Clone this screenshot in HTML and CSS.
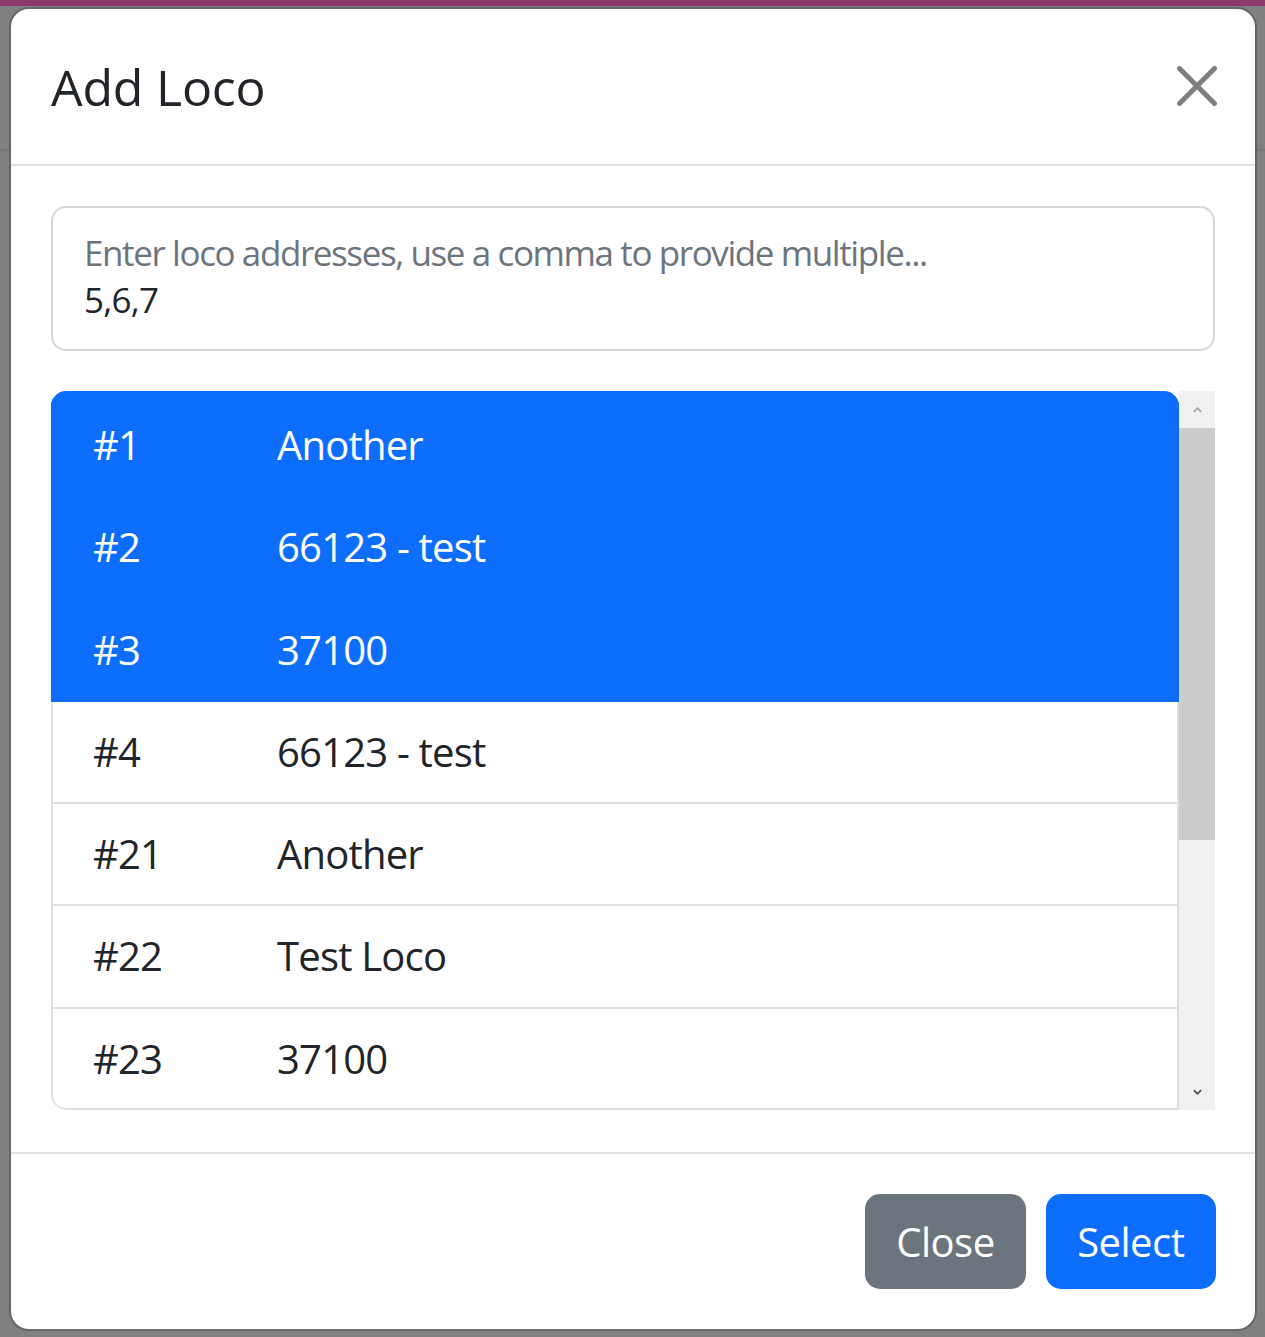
FILE: index.html
```html
<!DOCTYPE html>
<html lang="en">
<head>
<meta charset="utf-8">
<title>Add Loco</title>
<link rel="stylesheet" href="styles.css">
</head>
<body>
<div class="modal">
  <div class="modal-header">
    <h5 class="modal-title">Add Loco</h5>
    <button class="btn-close" aria-label="Close">
      <svg viewBox="0 0 16 16" width="40" height="40"><path d="M.293.293a1 1 0 0 1 1.414 0L8 6.586 14.293.293a1 1 0 1 1 1.414 1.414L9.414 8l6.293 6.293a1 1 0 0 1-1.414 1.414L8 9.414l-6.293 6.293a1 1 0 0 1-1.414-1.414L6.586 8 .293 1.707a1 1 0 0 1 0-1.414z"/></svg>
    </button>
  </div>
  <div class="modal-body">
    <div class="address-box">
      <div class="placeholder">Enter loco addresses, use a comma to provide multiple...</div>
      <div class="value">5,6,7</div>
    </div>
    <div class="list-wrap">
      <ul class="list">
        <li class="item active first"><span class="addr">#1</span><span class="name">Another</span></li>
        <li class="item active"><span class="addr">#2</span><span class="name">66123 - test</span></li>
        <li class="item active"><span class="addr">#3</span><span class="name">37100</span></li>
        <li class="item"><span class="addr">#4</span><span class="name">66123 - test</span></li>
        <li class="item"><span class="addr">#21</span><span class="name">Another</span></li>
        <li class="item"><span class="addr">#22</span><span class="name">Test Loco</span></li>
        <li class="item last"><span class="addr">#23</span><span class="name">37100</span></li>
      </ul>
      <div class="scrollbar">
        <div class="sb-btn"><svg viewBox="0 0 10 6" width="9" height="6"><path d="M1 5 5 1 9 5" fill="none" stroke="#a3a3a3" stroke-width="2"/></svg></div>
        <div class="sb-thumb"></div>
        <div class="sb-track"></div>
        <div class="sb-btn"><svg viewBox="0 0 10 6" width="9" height="6"><path d="M1 1 5 5 9 1" fill="none" stroke="#505050" stroke-width="2"/></svg></div>
      </div>
    </div>
  </div>
  <div class="modal-footer">
    <button class="btn btn-secondary">Close</button>
    <button class="btn btn-primary">Select</button>
  </div>
</div>
</body>
</html>
```
FILE: styles.css
```css
html, body {
  margin: 0;
  padding: 0;
}
body {
  width: 1265px;
  height: 1337px;
  overflow: hidden;
  background: linear-gradient(#8b3b6b 0 6px, #808080 6px 149px, #767676 149px 151px, #808080 151px);
  font-family: "Open Sans", "Noto Sans", sans-serif;
  color: #212529;
  padding-top: 7px;
  box-sizing: border-box;
}
.modal {
  margin-left: 9px;
  width: 1248px;
  height: 1324px;
  box-sizing: border-box;
  background: #fff;
  border: 2px solid #676767;
  border-radius: 20px;
  display: flex;
  flex-direction: column;
  overflow: hidden;
}
.modal-header {
  display: flex;
  align-items: center;
  justify-content: space-between;
  padding: 41px 38px 39px 40px;
  border-bottom: 2px solid #dee2e6;
}
.modal-title {
  margin: 0;
  font-size: 50px;
  line-height: 75px;
  font-weight: 500;
  letter-spacing: -0.2px;
}
.btn-close {
  border: 0;
  background: none;
  padding: 0;
  width: 40px;
  height: 40px;
  margin-top: -4px;
  opacity: .5;
  cursor: pointer;
}
.btn-close svg {
  display: block;
  fill: #000;
}
.modal-body {
  padding: 40px;
  flex: 1;
}
.address-box {
  height: 145px;
  box-sizing: border-box;
  border: 2px solid #d3d7dc;
  border-radius: 15px;
  padding: 21px 31px;
  font-size: 35px;
  line-height: 47px;
}
.placeholder {
  color: #6c757d;
  letter-spacing: -1.4px;
}
.value {
  color: #212529;
  letter-spacing: -0.8px;
}
.list-wrap {
  margin-top: 40px;
  display: flex;
  height: 719px;
}
.list {
  flex: 1;
  margin: 0;
  padding: 0;
  list-style: none;
  overflow: hidden;
  border-radius: 15px 15px 0 15px;
}
.item {
  display: grid;
  grid-template-columns: 184px 1fr;
  padding: 20px 40px;
  height: 60.3px;
  line-height: 60px;
  font-size: 40px;
  letter-spacing: -0.8px;
  border: 2px solid #dfdfdf;
  border-top: 0;
  background: #fff;
}
.item.active {
  background: #0d6efd;
  border-color: #0d6efd;
  color: #fff;
}
.item.first {
  padding-top: 24px;
}
.item.last {
  height: 59px;
  border-radius: 0 0 0 15px;
}
.scrollbar {
  width: 36px;
  background: #f0f0f0;
  display: flex;
  flex-direction: column;
}
.sb-btn {
  height: 37px;
  display: flex;
  align-items: center;
  justify-content: center;
}
.sb-btn svg {
  display: block;
}
.sb-thumb {
  height: 412px;
  background: #cdcdcd;
}
.sb-track {
  flex: 1;
}
.modal-footer {
  display: flex;
  justify-content: flex-end;
  align-items: center;
  padding: 30px 29px 30px 30px;
  border-top: 2px solid #dee2e6;
}
.btn {
  margin: 10px;
  height: 95px;
  padding: 0 31px;
  border: 0;
  border-radius: 15px;
  font-family: inherit;
  font-size: 40px;
  letter-spacing: -0.5px;
  color: #fff;
  cursor: pointer;
}
.btn-secondary {
  background: #6c757d;
}
.btn-primary {
  background: #0d6efd;
  padding: 0 31.5px;
}
```
